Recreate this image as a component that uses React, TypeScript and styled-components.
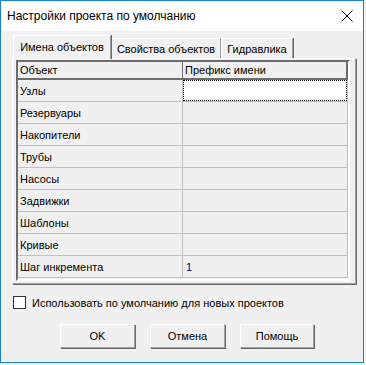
import styled, { createGlobalStyle } from "styled-components";

const GlobalStyle = createGlobalStyle`
  html, body {
    margin: 0;
    padding: 0;
    background: #f2f2f2;
  }
  body {
    font-family: "Liberation Sans", Arial, sans-serif;
    font-size: 11px;
    color: #000;
  }
`;

const Window = styled.div`
  width: 364px;
  height: 363px;
  box-sizing: border-box;
  border: 1px solid #1a7fd4;
  background: #f0f0f0;
  display: flex;
  flex-direction: column;
`;

const TitleBar = styled.div`
  height: 30px;
  background: #fff;
  display: flex;
  align-items: center;
  justify-content: space-between;
  padding-left: 6px;
  padding-right: 10px;
`;

const Title = styled.span`
  font-family: "Liberation Sans", Arial, sans-serif;
  font-size: 12px;
  color: #000;
`;

const Content = styled.div`
  padding: 4px 8px 0 11px;
  display: flex;
  flex-direction: column;
`;

const TabStrip = styled.div`
  display: flex;
  align-items: flex-end;
  height: 23px;
  padding-left: 1px;
`;

const Tab = styled.div<{ $active?: boolean; $w: number }>`
  width: ${(p) => p.$w}px;
  height: ${(p) => (p.$active ? 24 : 20)}px;
  margin-bottom: ${(p) => (p.$active ? -1 : 0)}px;
  box-sizing: border-box;
  background: #f0f0f0;
  border-top: 1px solid #fff;
  border-left: 1px solid #fff;
  border-right: 1px solid #a0a0a0;
  box-shadow: 1px 0 0 #696969;
  position: relative;
  z-index: ${(p) => (p.$active ? 2 : 1)};
  display: flex;
  align-items: center;
  justify-content: center;
  padding-bottom: ${(p) => (p.$active ? 2 : 0)}px;
  white-space: nowrap;
`;

const Page = styled.div`
  width: 344px;
  height: 226px;
  box-sizing: border-box;
  border-top: 1px solid #fff;
  border-left: 1px solid #fff;
  border-right: 1px solid #a0a0a0;
  border-bottom: 1px solid #a0a0a0;
  box-shadow: 1px 1px 0 #696969;
  padding: 1px 3px 1px 3px;
`;

const Grid = styled.div`
  width: 334px;
  height: 221px;
  box-sizing: border-box;
  border-top: 2px solid #6d6d6d;
  border-left: 2px solid #6d6d6d;
  border-right: 2px solid #fff;
  border-bottom: 2px solid #fff;
  display: flex;
  flex-direction: column;
`;

const HeaderRow = styled.div`
  display: grid;
  grid-template-columns: 165px 1fr;
  height: 18px;
  box-sizing: border-box;
  border-bottom: 2px solid #6d6d6d;
  border-right: 2px solid #6d6d6d;
`;

const HeaderCell = styled.div<{ $last?: boolean }>`
  border-right: ${(p) => (p.$last ? "none" : "1px solid #6d6d6d")};
  padding-left: 2px;
  display: flex;
  align-items: center;
`;

const Row = styled.div`
  display: grid;
  grid-template-columns: 165px 1fr;
  height: 22px;
  box-sizing: border-box;
  border-bottom: 1px solid #c0c0c0;
  border-right: 1px solid #c0c0c0;
`;

const Cell = styled.div<{ $focused?: boolean; $value?: boolean }>`
  border-right: 1px solid #c0c0c0;
  padding-left: ${(p) => (p.$value ? 3 : 2)}px;
  display: flex;
  align-items: center;
  box-sizing: border-box;
  color: ${(p) => (p.$value ? "#000080" : "#000")};
  background: ${(p) => (p.$focused ? "#fff" : "transparent")};
  outline: ${(p) => (p.$focused ? "1px dotted #000" : "none")};
  outline-offset: -1px;
  &:last-child {
    border-right: none;
  }
`;

const CheckRow = styled.label`
  display: flex;
  align-items: center;
  gap: 6px;
  margin-top: 12px;
  margin-left: 1px;
  height: 13px;
`;

const CheckBox = styled.span`
  width: 13px;
  height: 13px;
  box-sizing: border-box;
  border: 1px solid #333;
  background: #fff;
`;

const ButtonRow = styled.div`
  display: flex;
  gap: 15px;
  margin-top: 15px;
  margin-left: 48px;
`;

const Button = styled.div<{ $w?: number }>`
  width: ${(p) => p.$w ?? 75}px;
  height: 24px;
  box-sizing: border-box;
  background: #f0f0f0;
  border-top: 1px solid #fff;
  border-left: 1px solid #fff;
  border-right: 1px solid #a0a0a0;
  border-bottom: 1px solid #a0a0a0;
  box-shadow: 1px 1px 0 #696969;
  display: flex;
  align-items: center;
  justify-content: center;
`;

const rows: [string, string][] = [
  ["Узлы", ""],
  ["Резервуары", ""],
  ["Накопители", ""],
  ["Трубы", ""],
  ["Насосы", ""],
  ["Задвижки", ""],
  ["Шаблоны", ""],
  ["Кривые", ""],
  ["Шаг инкремента", "1"],
];

function CloseIcon() {
  return (
    <svg width="12" height="12" viewBox="0 0 12 12">
      <path d="M0.5 0.5 L11.5 11.5 M11.5 0.5 L0.5 11.5" stroke="#000" strokeWidth="1" />
    </svg>
  );
}

export default function App() {
  return (
    <>
      <GlobalStyle />
      <Window>
        <TitleBar>
          <Title>Настройки проекта по умолчанию</Title>
          <CloseIcon />
        </TitleBar>
        <Content>
          <TabStrip>
            <Tab $active $w={98}>Имена объектов</Tab>
            <Tab $w={110}>Свойства объектов</Tab>
            <Tab $w={72}>Гидравлика</Tab>
          </TabStrip>
          <Page>
            <Grid>
              <HeaderRow>
                <HeaderCell>Объект</HeaderCell>
                <HeaderCell $last>Префикс имени</HeaderCell>
              </HeaderRow>
              {rows.map(([name, value], i) => (
                <Row key={name}>
                  <Cell>{name}</Cell>
                  <Cell $focused={i === 0} $value>
                    {value}
                  </Cell>
                </Row>
              ))}
            </Grid>
          </Page>
          <CheckRow>
            <CheckBox />
            Использовать по умолчанию для новых проектов
          </CheckRow>
          <ButtonRow>
            <Button>OK</Button>
            <Button>Отмена</Button>
            <Button $w={74}>Помощь</Button>
          </ButtonRow>
        </Content>
      </Window>
    </>
  );
}
